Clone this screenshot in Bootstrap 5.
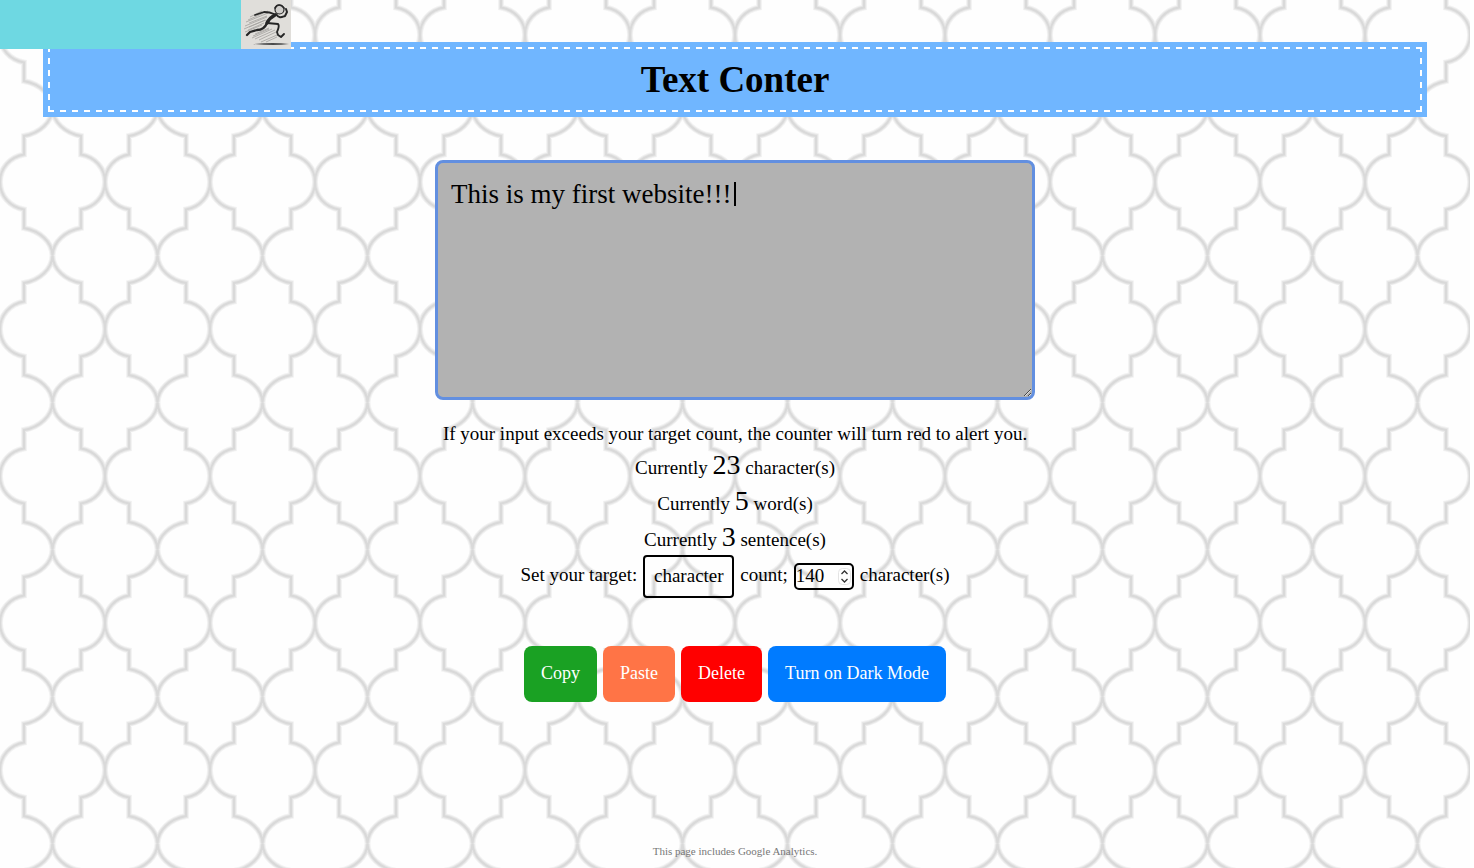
<!DOCTYPE html>
<html lang="en">
<head>
<meta charset="utf-8">
<meta name="viewport" content="width=device-width, initial-scale=1">
<title>Text Conter</title>
<link href="https://cdn.jsdelivr.net/npm/bootstrap@5.3.0/dist/css/bootstrap.min.css" rel="stylesheet">
<style>
  body { font-family: "Liberation Serif", serif; font-size: 19px; line-height: 27px; color: #000; background: #fff; }
  .page {
    margin-right: 4px;
    background: #fefefe url("data:image/svg+xml,%3Csvg xmlns='http://www.w3.org/2000/svg' width='105' height='147' viewBox='0 -35 105 147'%3E%3Cdefs%3E%3Cpath id='q' d='M105 0C105 14 95 25 81 27.5V46C65 49 53 60 52.500 73.500C52 60 40 49 24 46V27.500C10 25 0 14 0 0C0 -14 10 -25 24 -27.500V-46C40 -49 52 -60 52.500 -73.500C53 -60 65 -49 81 -46V-27.500C95 -25 105 -14 105 0Z'/%3E%3Cg id='t'%3E%3Cuse href='%23q'/%3E%3Cuse href='%23q' y='147'/%3E%3Cuse href='%23q' x='105'/%3E%3Cuse href='%23q' x='-105'/%3E%3C/g%3E%3C/defs%3E%3Cg fill='none'%3E%3Cuse href='%23t' stroke='%23f3f3f3' stroke-width='6'/%3E%3Cuse href='%23t' stroke='%23e6e6e6' stroke-width='4'/%3E%3Cuse href='%23t' stroke='%23d9d9d9' stroke-width='2'/%3E%3C/g%3E%3C/svg%3E") 0 0 / 105px 147px;
  }
  .progress-strip { width: 241px; height: 49px; background: #6ed8e2; }
  .runner { width: 50px; height: 49px; }
  .banner {
    --dash: #fff 0 6px, transparent 6px 12px;
    margin: 47px 48px 48px; padding: 10px;
    background:
      repeating-linear-gradient(90deg, var(--dash)) 0 0 / 100% 2px no-repeat,
      repeating-linear-gradient(90deg, var(--dash)) 0 100% / 100% 2px no-repeat,
      repeating-linear-gradient(0deg, var(--dash)) 0 0 / 2px 100% no-repeat,
      repeating-linear-gradient(0deg, var(--dash)) 100% 0 / 2px 100% no-repeat,
      #70b6ff;
    box-shadow: 0 0 0 5px #70b6ff;
  }
  .banner h1 { font-size: 37px; line-height: 45px; font-weight: 700; }
  .entry-wrap { width: 600px; max-width: 100%; }
  .entry { height: 240px; padding: 13px; font-size: 27px; line-height: 36px; color: #000; background: #b2b2b2; border: 3px solid #628fe0; border-radius: 8px; }
  .entry:focus { color: #000; background: #b2b2b2; border-color: #628fe0; box-shadow: none; caret-color: transparent; }
  .caret { top: 22px; left: 299px; width: 2px; height: 24px; background: #000; }
  .hint { margin: 20px 0 0; }
  .stat { height: 36px; line-height: 42px; }
  .stat output { display: inline; font-size: 28px; line-height: 28px; }
  .target { column-gap: 6px; }
  .target label, .target span { padding-bottom: 4px; }
  .kind { width: 91px; height: 43px; padding: 0 0 3px; appearance: none; color: #000; background: transparent; border: 2px solid #000; border-radius: 4px; text-align: center; }
  .limit-wrap { width: 60px; }
  .limit { height: 27px; padding: 0 0 2px; color: #000; background: transparent; border: 2px solid #000; border-radius: 5px; appearance: textfield; }
  .limit::-webkit-inner-spin-button { appearance: none; margin: 0; }
  .stepper { top: 5px; right: 3px; }
  .actions { gap: 6px; }
  .act { --bs-btn-color: #fff; --bs-btn-hover-color: #fff; height: 56px; padding: 0 17px 2px; font-size: 18px; border: 0; border-radius: 8px; background: var(--act-bg); }
  .act:hover { background: var(--act-bg); }
  .act-copy { --act-bg: #1aa123; }
  .act-paste { --act-bg: #ff7446; }
  .act-delete { --act-bg: #f00; }
  .act-dark { --act-bg: #007bff; }
  .note { padding-bottom: 9px; font-size: 11px; line-height: 16px; color: #777; }
</style>
</head>
<body>
<div class="page min-vh-100 d-flex flex-column">
  <div class="position-absolute top-0 start-0 d-flex">
    <div class="progress-strip"></div>
    <svg class="runner" viewBox="0 0 50 49" role="img" aria-label="Runner">
      <rect width="50" height="49" fill="#e0deda"/>
      <g fill="none" stroke="#a3a19e" stroke-width=".8">
        <path d="M9 17l12-6M7 20l20-9M5 22l22-9M8 23l18-7M4 26l22-9M8 27l17-7M3 29l21-9M7 30l16-7M4 32l17-7M12 36l16-7M11 38l20-9M14 39l20-9M18 40l17-8M20 42l16-7M25 42l11-5M14 34l14-6"/>
      </g>
      <g fill="none" stroke="#262626" stroke-linecap="round" stroke-linejoin="round">
        <path d="M33 14C29 12 26 12 23 12L14 15" stroke-width="1.800"/>
        <path d="M34 15C30 17 28 19 26 23" stroke-width="3.500"/>
        <path d="M26 23C24 28 21 30 16 30L9 32L6 35" stroke-width="2.300"/>
        <path d="M26 23L37 24C39 26 37 29 36 32L37 35L40 37L43 34" stroke-width="1.900"/>
        <path d="M35 14C38 19 41 17 44 16L46 12L45 9" stroke-width="2"/>
        <circle cx="38.500" cy="9.500" r="4.500" fill="#d0cecb" stroke-width="1.200"/>
        <path d="M34 8C36 4 40 4 43 8" stroke-width="1.700"/>
      </g>
      <path d="M12 44Q33 42 48 44Q34 46 12 44" fill="#4b4b4b"/>
    </svg>
  </div>

  <header class="banner"><h1 class="text-center mb-0">Text Conter</h1></header>

  <main class="flex-grow-1 d-flex flex-column align-items-center">
    <div class="entry-wrap position-relative">
      <textarea class="entry form-control" aria-label="Text to count" spellcheck="false" autofocus>This is my first website!!!</textarea>
      <span class="caret position-absolute" aria-hidden="true"></span>
    </div>
    <p class="hint text-center">If your input exceeds your target count, the counter will turn red to alert you.</p>
    <div class="stat">Currently <output>23</output> character(s)</div>
    <div class="stat">Currently <output>5</output> word(s)</div>
    <div class="stat">Currently <output>3</output> sentence(s)</div>
    <div class="target d-flex flex-wrap justify-content-center align-items-center">
      <label for="kind">Set your target:</label>
      <select id="kind" class="kind"><option>character</option><option>word</option><option>sentence</option></select>
      <label for="limit">count;</label>
      <div class="limit-wrap position-relative d-flex">
        <input id="limit" class="limit w-100" type="number" value="140">
        <svg class="stepper position-absolute" width="13" height="17" viewBox="0 0 13 17" aria-hidden="true">
          <rect x=".5" y=".5" width="12" height="16" rx="4" fill="#fff" stroke="#e4e4e4"/>
          <path d="M3.500 6l3-3 3 3M3.500 11l3 3 3-3" fill="none" stroke="#333" stroke-width="1.300"/>
        </svg>
      </div>
      <span>character(s)</span>
    </div>
    <div class="actions d-flex flex-wrap justify-content-center mt-5">
      <button type="button" class="btn act act-copy">Copy</button>
      <button type="button" class="btn act act-paste">Paste</button>
      <button type="button" class="btn act act-delete">Delete</button>
      <button type="button" class="btn act act-dark">Turn on Dark Mode</button>
    </div>
  </main>
  <footer class="note text-center">This page includes Google Analytics.</footer>
</div>
<script src="https://cdn.jsdelivr.net/npm/bootstrap@5.3.0/dist/js/bootstrap.bundle.min.js"></script>
</body>
</html>
